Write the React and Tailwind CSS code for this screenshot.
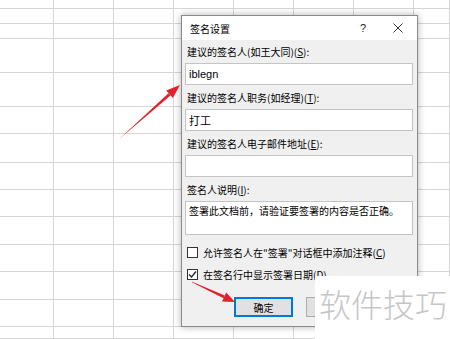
import { useMemo } from 'react';

const cjk = { fontFamily: '"Noto Sans CJK SC", "Liberation Sans", sans-serif' };
const latin = { fontFamily: '"Liberation Sans", "Noto Sans CJK SC", sans-serif' };

const colWidths = [54, 60, 60, 60, 60, 60, 60, 36];
const rowHeights = [9, 15, 15, 34, 34, 27, 29, 27, 27, 28, 27, 28, 27, 12];

function Sheet() {
  const cells = useMemo(() => {
    const out = [];
    rowHeights.forEach((h, r) =>
      colWidths.forEach((w, c) => out.push({ key: `${r}-${c}` }))
    );
    return out;
  }, []);

  return (
    <div className="grid grid-cols-[54px_60px_60px_60px_60px_60px_60px_36px] grid-rows-[9px_15px_15px_34px_34px_27px_29px_27px_27px_28px_27px_28px_27px_12px] bg-white w-[450px] h-[339px]">
      {cells.map((c) => (
        <div key={c.key} className="border-r border-b border-[#d6d6d6]" />
      ))}
    </div>
  );
}

function Field({ label, value, tall }) {
  return (
    <div className="flex flex-col">
      <div className="h-[14px] leading-[14px] pl-[5px] text-[10px] text-black" style={cjk}>
        {label}
      </div>
      <div
        className={`mt-[4px] ml-[3px] mr-[4px] bg-white border border-[#c4c4c4] flex items-center px-[3px] text-[11px] text-black ${
          tall ? 'h-[34px] items-start pt-[1px]' : 'h-[22px]'
        }`}
        style={cjk}
      >
        {value}
      </div>
    </div>
  );
}

function Check({ checked, children }) {
  return (
    <div className="flex items-center h-[14px] pl-[5px]">
      <div className="w-[11px] h-[11px] border border-[#333] bg-white flex items-center justify-center">
        {checked && (
          <svg width="9" height="9" viewBox="0 0 9 9">
            <path d="M1 4.5 L3.5 7 L8 1.5" fill="none" stroke="#222" strokeWidth="1.3" />
          </svg>
        )}
      </div>
      <span className="ml-[5px] text-[10px] text-black whitespace-nowrap" style={cjk}>
        {children}
      </span>
    </div>
  );
}

function Dialog() {
  return (
    <div className="absolute left-[181px] top-[15px] w-[237px] h-[312px] border border-[#8a8a8a] bg-[#f0f0f0] shadow-[0_0_7px_rgba(0,0,0,0.3)] flex flex-col">
      {/* 标题栏 */}
      <div className="h-[24px] bg-white flex items-center">
        <span className="pl-[8px] text-[10px] text-black" style={cjk}>
          签名设置
        </span>
        <span className="ml-auto mr-[27px] text-[11px] text-[#222]" style={latin}>
          ?
        </span>
        <svg className="mr-[14px]" width="10" height="10" viewBox="0 0 10 10">
          <path d="M0.5 0.5 L9.5 9.5 M9.5 0.5 L0.5 9.5" stroke="#333" strokeWidth="1" />
        </svg>
      </div>

      <div className="flex flex-col pt-[5px]">
        <div className="flex flex-col gap-[6px]">
          <Field
            label={
              <>
                建议的签名人(如王大同)(<u>S</u>):
              </>
            }
            value={<span style={latin}>iblegn</span>}
          />
          <Field
            label={
              <>
                建议的签名人职务(如经理)(<u>T</u>):
              </>
            }
            value="打工"
          />
          <Field
            label={
              <>
                建议的签名人电子邮件地址(<u>E</u>):
              </>
            }
            value=""
          />
          <Field
            label={
              <>
                签名人说明(<u>I</u>):
              </>
            }
            value={<span className="text-[10px]">签署此文档前，请验证要签署的内容是否正确。</span>}
            tall
          />
        </div>

        <div className="mt-[10px] flex flex-col gap-[8px]">
          <Check>
            允许签名人在"签署"对话框中添加注释(<u>C</u>)
          </Check>
          <Check checked>
            在签名行中显示签署日期(<u>D</u>)
          </Check>
        </div>

        <div className="mt-[16px] flex justify-center gap-[13px]">
          <div
            className="w-[59px] h-[20px] border-2 border-[#0078d7] bg-[#e1e1e1] flex items-center justify-center text-[10px] text-black"
            style={cjk}
          >
            确定
          </div>
          {/* 取消按钮被水印遮住 */}
          <div className="w-[59px] h-[20px] border border-[#adadad] bg-[#e1e1e1]" />
        </div>
      </div>
    </div>
  );
}

function Arrows() {
  return (
    <svg className="absolute left-0 top-0 pointer-events-none" width="450" height="339" viewBox="0 0 450 339">
      {/* 箭头 1 */}
      <polygon points="116.5,141.5 117.5,140.5 170.5,95.4 168.5,93.2" fill="#e3202b" />
      <polygon points="180,85 172.8,98.1 166.2,90.6" fill="#e3202b" />
      {/* 箭头 2 */}
      <polygon points="191.6,281.6 192.4,282.4 223.5,298.3 224.7,295.5" fill="#e3202b" />
      <polygon points="235,302 222,301.4 226.2,292.4" fill="#e3202b" />
    </svg>
  );
}

export default function App() {
  return (
    <div className="relative w-[450px] h-[339px] overflow-hidden bg-white">
      <Sheet />
      <Dialog />
      <Arrows />
      {/* 水印 */}
      <div className="absolute left-[315px] top-[276px] w-[135px] h-[63px] bg-white flex items-start pt-[9px] pl-[4px]">
        <span className="text-[32px] leading-[36px] font-light text-[#c6c6c6] whitespace-nowrap" style={cjk}>
          软件技巧
        </span>
      </div>
    </div>
  );
}
